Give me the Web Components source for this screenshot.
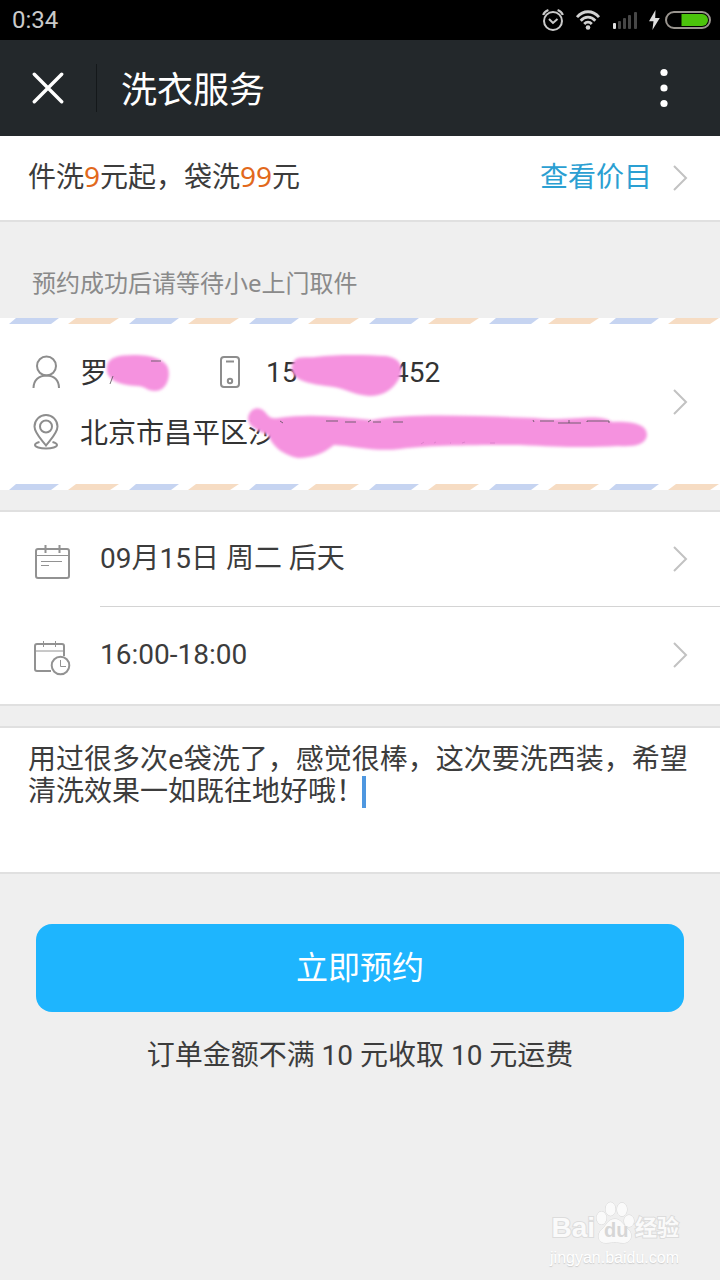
<!DOCTYPE html>
<html lang="zh-CN">
<head>
<meta charset="utf-8">
<meta name="viewport" content="width=device-width, initial-scale=1">
<title>洗衣服务</title>
<style>
  body {
    margin: 0;
    background: #efefef;
    color: #3c3c3c;
    font-family: Roboto, "Noto Sans CJK SC", sans-serif;
    font-size: 28px;
    line-height: 32px;
  }
</style>
</head>
<body>
<laundry-page></laundry-page>

<script>
const define = (name, html, base = HTMLElement) => {
  const template = document.createElement('template');
  template.innerHTML = html;
  customElements.define(name, class extends base {
    constructor() {
      super();
      this.attachShadow({ mode: 'open' }).append(template.content.cloneNode(true));
    }
  });
};

define('chevron-icon', `
  <style>:host { display: block; flex: none; width: 16px; height: 28px; } svg { display: block; }</style>
  <svg width="16" height="28" viewBox="0 0 16 28" fill="none" stroke="#c2c2c2" stroke-width="2" aria-hidden="true">
    <path d="M2 2 14 14 2 26"/>
  </svg>`);

define('status-bar', `
  <style>
    :host { display: flex; align-items: center; justify-content: space-between; height: 40px; padding: 0 9px 0 12px; background: #000; color: #cacaca; font-size: 24px; }
    .icons { display: flex; align-items: center; gap: 11px; }
    .power { display: flex; align-items: center; gap: 5px; }
    svg { display: block; }
  </style>
  <span>0:34</span>
  <div class="icons">
    <svg width="22" height="24" viewBox="0 0 22 24" fill="none" stroke="#cacaca" stroke-width="2">
      <circle cx="11" cy="13" r="9"/>
      <path d="M1.200 7C2 4.500 4 2.800 6.400 2M20.800 7C20 4.500 18 2.800 15.600 2" stroke-width="2.200"/>
      <path d="M7 11 11 15 15.500 11"/>
    </svg>
    <svg width="26" height="22" viewBox="0 0 26 22" fill="none" stroke="#d2d2d2" stroke-width="2.800">
      <path d="M2 8.200C8.300.900 17.700.900 24 8.200M5.700 11.700C10 6.900 16 6.900 20.300 11.700M9.200 15C11.500 12.600 14.500 12.600 16.800 15"/>
      <circle cx="13" cy="18.500" r="2.300" fill="#d2d2d2" stroke="none"/>
    </svg>
    <svg width="26" height="20" viewBox="0 0 26 20">
      <rect x="1" y="13" width="3" height="6" rx="1" fill="#e0e0e0"/>
      <g fill="#474747"><rect x="6" y="11" width="3" height="8" rx="1"/><rect x="11" y="8" width="3" height="11" rx="1"/><rect x="16" y="5" width="3" height="14" rx="1"/><rect x="22" y="2" width="3" height="17" rx="1"/></g>
    </svg>
    <div class="power">
      <svg width="11" height="22" viewBox="0 0 11 22"><path d="M6.500 1 0 12.300H4.500L3.400 21 10.800 9H6.200Z" fill="#dedede"/></svg>
      <svg width="46" height="18" viewBox="0 0 46 18">
        <rect x="1" y="1" width="44" height="16" rx="8" fill="none" stroke="#9a958f" stroke-width="2"/>
        <path d="M16.500 3H37A6 6 0 0 1 37 15H16.500Z" fill="#4cc40c"/>
      </svg>
    </div>
  </div>`);

define('title-bar', `
  <style>
    :host { display: flex; align-items: center; height: 96px; background: #23282b; color: #fff; }
    button { display: flex; align-items: center; justify-content: center; width: 96px; height: 96px; padding: 0; border: 0; background: none; color: inherit; }
    .menu { width: 112px; }
    i { width: 1px; height: 48px; background: #14181a; }
    h1 { flex: 1; margin: 0; padding: 6px 0 0 24px; font-size: 36px; line-height: 48px; font-weight: 400; }
  </style>
  <button type="button" aria-label="关闭">
    <svg width="32" height="32" viewBox="0 0 32 32" stroke="#fff" stroke-width="3.400" stroke-linecap="round"><path d="M2.300 2.300 29.700 29.700M29.700 2.300 2.300 29.700"/></svg>
  </button>
  <i></i>
  <h1><slot></slot></h1>
  <button class="menu" type="button" aria-label="更多">
    <svg width="10" height="40" viewBox="0 0 10 40" fill="#fff"><circle cx="5" cy="4.500" r="3.600"/><circle cx="5" cy="20" r="3.600"/><circle cx="5" cy="35.500" r="3.600"/></svg>
  </button>`);

define('price-row', `
  <style>
    :host { display: flex; align-items: center; height: 84px; padding: 0 32px 0 28px; background: #fff; border-bottom: 2px solid #e0e0e0; font-family: "Noto Sans", "Noto Sans CJK SC", sans-serif; }
    p { flex: 1; margin: 0; padding-bottom: 4px; }
    a { display: flex; align-items: center; gap: 20px; color: #2b9fd2; text-decoration: none; }
    a span { padding-bottom: 4px; }
    ::slotted(b) { font-weight: 400; color: #e2691c; }
  </style>
  <p><slot></slot></p>
  <a href="#prices"><span>查看价目</span><chevron-icon></chevron-icon></a>`);

define('hint-line', `
  <style>:host { display: block; padding: 45px 32px 19px; color: #8a8a8a; font: 24px/32px "Noto Sans", "Noto Sans CJK SC", sans-serif; }</style>
  <slot></slot>`);

define('airmail-stripe', `
  <style>:host { display: block; height: 6px; } svg { display: block; width: 100%; height: 6px; }</style>
  <svg aria-hidden="true">
    <defs><pattern id="dash" width="120" height="6" patternUnits="userSpaceOnUse">
      <path d="M16 0H59L51 6H9Z" fill="#c6d4f1"/><path d="M76 0H119L110 6H68Z" fill="#f6dcc3"/>
    </pattern></defs>
    <rect width="100%" height="6" fill="url(#dash)"/>
  </svg>`);

define('address-card', `
  <style>
    :host { display: block; background: #fff; }
    a { position: relative; display: flex; align-items: center; padding: 18px 32px 22px; color: #333; text-decoration: none; }
    .lines { flex: 1; }
    .line { display: flex; align-items: center; height: 60px; }
    .line span { padding-top: 4px; }
    .line .num { padding-top: 2px; }
    .icon { display: block; flex: none; width: 28px; margin: 0 20px 0 0; }
    .name { width: 138px; }
    .digits { width: 127px; }
    .smear { position: absolute; left: 0; top: 0; pointer-events: none; }
  </style>
  <airmail-stripe></airmail-stripe>
  <a href="#address">
    <div class="lines">
      <div class="line">
        <svg class="icon" width="28" height="34" viewBox="0 0 28 34" fill="none" stroke="#8d8d8d" stroke-width="2"><circle cx="14.500" cy="11" r="9.500"/><path d="M1.500 33C1.500 25 7 20.500 14.500 20.500S27 25 27 33"/></svg>
        <span class="name">罗</span>
        <svg class="icon" width="28" height="34" viewBox="0 0 28 34" fill="none" stroke="#8d8d8d" stroke-width="2"><rect x="3" y="2" width="18" height="30" rx="3"/><path d="M8 6.500H16"/><circle cx="12" cy="26" r="2.200"/></svg>
        <span class="num digits">15</span><span class="num">452</span>
      </div>
      <div class="line">
        <svg class="icon" width="28" height="36" viewBox="0 0 28 36" fill="none" stroke="#8d8d8d" stroke-width="2"><path d="M14 31.500C9 25 2.500 19 2.500 12.500A11.500 11.500 0 0 1 25.500 12.500C25.500 19 19 25 14 31.500Z"/><circle cx="14" cy="12.500" r="6"/><path d="M7.500 28C4 29 3 30 3 31 3 33 8 34.500 14 34.500S25 33 25 31C25 30 24 29 20.500 28"/></svg>
        <span>北京市昌平区沙</span>
      </div>
    </div>
    <chevron-icon></chevron-icon>
    <svg class="smear" width="660" height="160" viewBox="0 324 660 160" aria-hidden="true">
      <defs><filter id="soft" x="-5%" y="-20%" width="110%" height="140%"><feGaussianBlur stdDeviation="1.600"/></filter></defs>
      <g fill="#f592df" filter="url(#soft)">
        <path d="M107 366C108 358 117 355 134 355C151 355 165 359 168 368C171 378 166 391 155 391C147 391 145 386 137 386C119 385 105 380 107 366Z"/>
        <path d="M292 366C294 355 302 358 315 357C340 354 367 355 386 356C399 358 405 366 400 377C394 389 384 396 369 396C353 395 343 387 326 386C308 384 289 379 292 366Z"/>
        <path d="M248 418C249 410 257 405 264 411C269 416 269 419 278 418C310 413 341 417 372 420C410 413 475 416 535 418C570 422 599 412 612 422C634 421 647 425 647 435C646 445 634 447 618 446C585 448 560 447 520 445C475 445 430 445 400 449C374 452 354 446 334 445C324 453 313 458 298 458C283 455 273 447 268 435C259 431 248 427 248 418Z"/>
      </g>
      <g fill="none" stroke="#565056" stroke-width="1" opacity=".8">
        <path d="M110 384 113 376M151 361H161M280 421 283 423M326 421H338M345 422H356M368 422 371 420M373 422H381M393 422H403M533 420 534 422M540 421H554M558 423H581M569 420V423M587 422V421H609V423"/>
        <path d="M421 444 424 442M434 443 436 442M450 443H451M462 443 465 442M490 443H495" stroke="#d77fc7"/>
      </g>
    </svg>
  </a>
  <airmail-stripe></airmail-stripe>`);

define('card-group', `
  <style>:host { display: block; margin-top: 20px; background: #fff; border-top: 2px solid #e0e0e0; border-bottom: 2px solid #e0e0e0; }</style>
  <slot></slot>`);

define('pick-row', `
  <style>
    :host { display: block; padding-bottom: 1px; }
    button { display: flex; align-items: center; width: 100%; padding: 0 32px 0 33px; border: 0; background: none; color: inherit; font: inherit; text-align: left; }
    ::slotted(svg) { display: block; flex: none; margin: 6px 29px 0 0; }
    .body { display: flex; flex: 1; align-items: center; height: 96px; }
    .text { flex: 1; }
    :host([divided]) { background: linear-gradient(#d4d4d4, #d4d4d4) 100px 100% / 100% 1px no-repeat; }
    :host([divided]) .body { height: 94px; }
  </style>
  <button type="button"><slot name="icon"></slot><span class="body"><span class="text"><slot></slot></span><chevron-icon></chevron-icon></span></button>`);

define('remark-box', `
  <style>
    :host { display: block; position: relative; }
    textarea { display: block; box-sizing: border-box; width: 100%; height: 144px; padding: 14px 28px; border: 0; outline: 0; resize: none; overflow: hidden; background: none; color: inherit; font: 28px/32px "Noto Sans", "Noto Sans CJK SC", sans-serif; }
    i { position: absolute; left: 362px; top: 48px; width: 4px; height: 32px; background: #4e97e0; }
  </style>
  <textarea aria-label="备注">用过很多次e袋洗了，感觉很棒，这次要洗西装，希望清洗效果一如既往地好哦！</textarea><i></i>`);

define('submit-panel', `
  <style>
    :host { display: block; padding: 50px 36px 0; text-align: center; }
    button { display: block; width: 100%; height: 88px; padding: 0; border: 0; border-radius: 16px; background: #1eb5fe; color: #fff; font: inherit; font-size: 32px; }
    p { margin: 28px 0 0; }
  </style>
  <button type="submit">立即预约</button>
  <p><slot></slot></p>`);

define('site-mark', `
  <style>
    :host { display: flex; flex-direction: column; align-items: flex-end; margin-top: auto; padding: 32px 41px 12px 0; color: #fafafa; font-family: "Liberation Sans", "Noto Sans CJK SC", sans-serif; -webkit-text-stroke: 2px #dcdcdc; paint-order: stroke fill; }
    .logo { display: flex; align-items: flex-end; height: 44px; font-size: 28px; line-height: 32px; font-weight: 700; }
    .paw { position: relative; width: 40px; height: 44px; }
    .paw svg { display: block; }
    .du { position: absolute; left: 9px; top: 20px; color: #d6d6d6; font-size: 20px; line-height: 20px; -webkit-text-stroke: 0; }
    .cn { font-size: 22px; }
    .url { margin-top: 4px; font-size: 16px; line-height: 20px; color: #fff; -webkit-text-stroke: 0; text-shadow: 0 1px 1px #ccc; }
  </style>
  <div class="logo"><span>Bai</span>
    <span class="paw">
      <svg width="40" height="44" viewBox="0 0 40 44" fill="#fafafa" stroke="#d8d8d8" stroke-width="1">
        <ellipse cx="6.500" cy="18" rx="5" ry="6.500"/><ellipse cx="15.500" cy="9" rx="5" ry="6.800"/><ellipse cx="27" cy="9.500" rx="5" ry="6.800"/><ellipse cx="34" cy="21" rx="5" ry="6"/>
        <path d="M20 19C26 19 28 25 33 29C39 35 36 43 28 43C24 43 22 42 20 42S15 43 11 43C3 43 1 35 7 29C12 25 13 19 20 19Z"/>
      </svg><span class="du">du</span>
    </span><span class="cn">经验</span></div>
  <span class="url">jingyan.baidu.com</span>`);

define('laundry-page', `
  <style>:host { display: flex; flex-direction: column; min-height: 100vh; }</style>
  <status-bar></status-bar>
  <title-bar>洗衣服务</title-bar>
  <price-row>件洗<b>9</b>元起，袋洗<b>99</b>元</price-row>
  <hint-line>预约成功后请等待小e上门取件</hint-line>
  <address-card></address-card>
  <card-group>
    <pick-row divided>
      <svg slot="icon" width="38" height="36" viewBox="0 0 38 36" fill="none" stroke="#929292" stroke-width="2"><rect x="3" y="5" width="33" height="29" rx="2"/><path d="M3 11.500H36M8 17.500H29M8 21.500H16" stroke-width="1"/><path d="M12.500 1V9M26.500 1V9"/></svg>
      09月15日 周二 后天
    </pick-row>
    <pick-row>
      <svg slot="icon" width="38" height="36" viewBox="0 0 38 36" fill="none" stroke="#929292" stroke-width="2"><path d="M18 31H4A2 2 0 0 1 2 29V6A2 2 0 0 1 4 4H29A2 2 0 0 1 31 6V16"/><path d="M2 11H31M10.500 1V7M22.500 1V7" stroke-width="1"/><circle cx="27.500" cy="25.500" r="8.800"/><path d="M27.500 20V26.500H33" stroke-width="1"/></svg>
      16:00-18:00
    </pick-row>
  </card-group>
  <card-group><remark-box></remark-box></card-group>
  <submit-panel>订单金额不满 10 元收取 10 元运费</submit-panel>
  <site-mark></site-mark>`);
</script>
</body>
</html>
